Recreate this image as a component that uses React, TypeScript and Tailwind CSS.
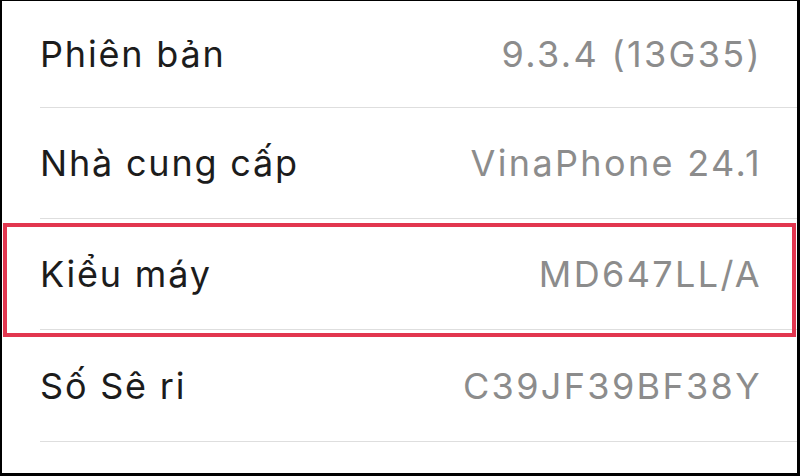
const rows = [
  { label: 'Phiên bản', value: '9.3.4 (13G35)', h: 'h-[107px]' },
  { label: 'Nhà cung cấp', value: 'VinaPhone 24.1', h: 'h-[111px]' },
  { label: 'Kiểu máy', value: 'MD647LL/A', h: 'h-[111px]' },
  { label: 'Số Sê ri', value: 'C39JF39BF38Y', h: 'h-[112px]' },
]

export default function App() {
  return (
    <div className="h-[476px] w-[800px] overflow-hidden bg-black pt-px pr-[3px] pb-[3px] pl-[2px]">
      <div
        className="relative h-full w-full bg-white"
        style={{ fontFamily: 'Inter, "Liberation Sans", sans-serif' }}
      >
        {rows.map((row) => (
          <div key={row.label} className="pl-[38px]">
            <div
              className={`flex items-center justify-between border-b border-[#dedede] pr-[35px] ${row.h}`}
            >
              <span className="text-[36px] tracking-[0.05em] text-[#1c1c1c]">{row.label}</span>
              <span className="text-[36px] tracking-[0.065em] text-[#8c8c8c]">{row.value}</span>
            </div>
          </div>
        ))}
        <div className="absolute left-px top-[222px] h-[114px] w-[793px] border-4 border-[#e2364f]" />
      </div>
    </div>
  )
}
